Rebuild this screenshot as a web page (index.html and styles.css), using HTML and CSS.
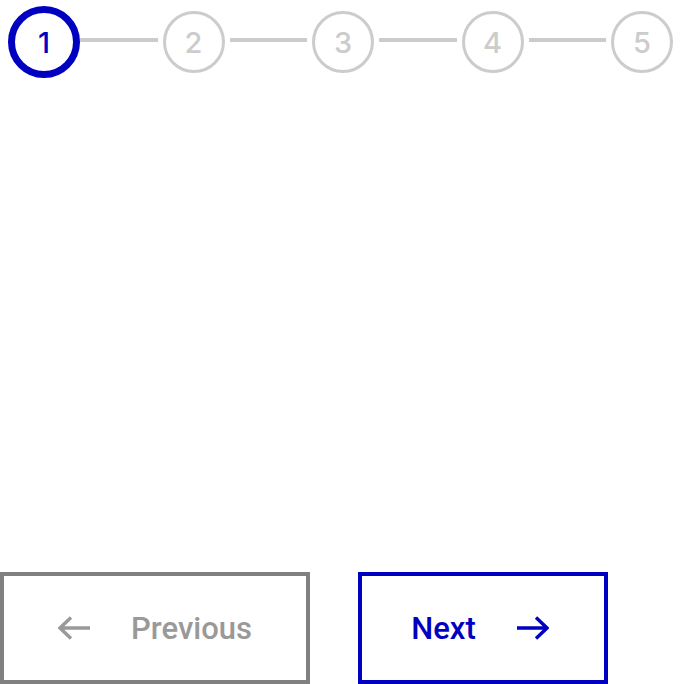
FILE: index.html
```html
<!DOCTYPE html>
<html lang="en">
<head>
<meta charset="utf-8">
<title>Stepper</title>
<link rel="stylesheet" href="styles.css">
</head>
<body>
<div class="stepper">
  <div class="step active">1</div>
  <div class="line"></div>
  <div class="step">2</div>
  <div class="line"></div>
  <div class="step">3</div>
  <div class="line"></div>
  <div class="step">4</div>
  <div class="line"></div>
  <div class="step">5</div>
</div>
<div class="panel"></div>
<div class="actions">
  <button class="btn prev" type="button">
    <svg class="arrow" width="33" height="24" viewBox="0 0 33 24" aria-hidden="true"><path d="M2 12 H32 M13 1.5 L2 12 L13 22.5" fill="none" stroke="currentColor" stroke-width="3.4"/></svg>
    <span>Previous</span>
  </button>
  <button class="btn next" type="button">
    <span>Next</span>
    <svg class="arrow" width="33" height="24" viewBox="0 0 33 24" aria-hidden="true"><path d="M1 12 H31 M20 1.5 L31 12 L20 22.5" fill="none" stroke="currentColor" stroke-width="3.4"/></svg>
  </button>
</div>
</body>
</html>
```
FILE: styles.css
```css
html, body {
  margin: 0;
  padding: 0;
  background: #ffffff;
}

body {
  width: 686px;
  height: 684px;
  overflow: hidden;
  font-family: Roboto, "Liberation Sans", Arial, sans-serif;
}

.stepper {
  display: flex;
  align-items: center;
  gap: 5px;
  margin: 11px 13px 0 13px;
}

.step {
  box-sizing: border-box;
  width: 62px;
  height: 62px;
  flex: 0 0 auto;
  border: 3px solid #cccccc;
  border-radius: 50%;
  display: flex;
  align-items: center;
  justify-content: center;
  color: #cccccc;
  font-family: Inter, "DejaVu Sans", sans-serif;
  font-size: 29px;
  font-weight: 500;
  line-height: 1;
}

.step.active {
  width: 72px;
  height: 72px;
  margin: -5px;
  border: 7px solid #0000c0;
  color: #0000c0;
}

.line {
  flex: 1 1 auto;
  height: 4px;
  margin-bottom: 4px;
  background: #cccccc;
}

.panel {
  height: 499px;
}

.actions {
  display: flex;
  gap: 48px;
}

.btn {
  box-sizing: border-box;
  height: 112px;
  display: flex;
  align-items: center;
  justify-content: center;
  gap: 40px;
  background: #ffffff;
  border: 4px solid;
  padding: 0;
  margin: 0;
  font-family: Roboto, "Liberation Sans", Arial, sans-serif;
  font-size: 31px;
  font-weight: 500;
  cursor: pointer;
}

.btn.prev {
  width: 310px;
  border-color: #808080;
  color: #999999;
}

.btn.next {
  width: 250px;
  border-color: #0000c0;
  color: #0000c0;
  padding-right: 6px;
}

.arrow {
  display: block;
  flex: 0 0 auto;
}
```
